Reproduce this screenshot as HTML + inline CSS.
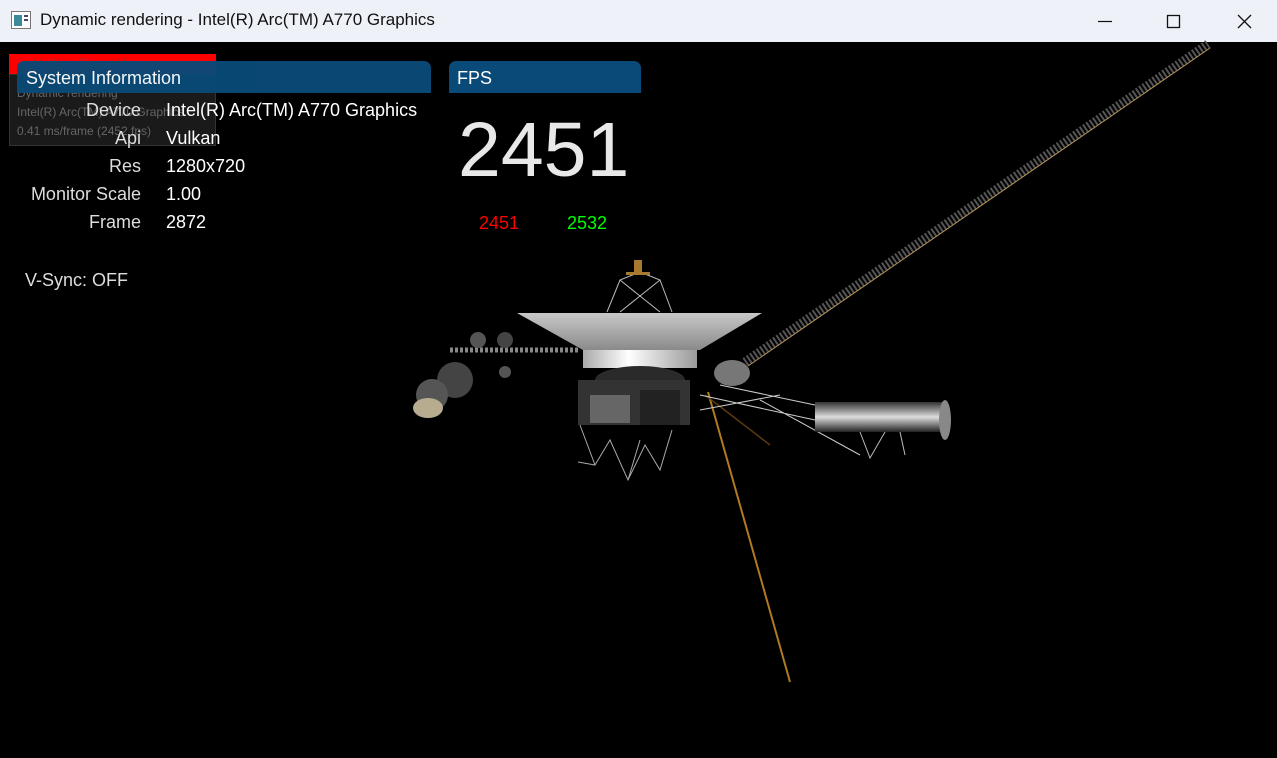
<!DOCTYPE html>
<html><head><meta charset="utf-8"><style>
body{margin:0;width:1277px;height:758px;background:#000;overflow:hidden;position:relative;font-family:"Liberation Sans","DejaVu Sans",sans-serif;}
.tb{position:absolute;left:0;top:0;width:1277px;height:42px;background:#eef1f7;}
.tb .t{position:absolute;left:40px;top:10px;font-size:17px;color:#111;}
.hdr{position:absolute;background:#0a4a78;border-radius:7px 7px 0 0;color:#fff;font-size:18px;}
.l{position:absolute;color:#ddd;font-size:18px;text-align:right;width:130px}
.v{position:absolute;color:#fff;font-size:18px}
</style></head><body>
<div class="tb">
<svg style="position:absolute;left:11px;top:11px" width="20" height="18"><rect x="0.5" y="0.5" width="19" height="17" fill="#fff" stroke="#777"/><rect x="3" y="4" width="8" height="11" fill="#3a8a9a"/><rect x="13" y="4" width="4" height="2" fill="#447"/><rect x="13" y="8" width="4" height="2" fill="#447"/></svg>
<div class="t">Dynamic rendering - Intel(R) Arc(TM) A770 Graphics</div>
<svg style="position:absolute;left:1098px;top:14px" width="160" height="16"><line x1="0" y1="7.5" x2="14" y2="7.5" stroke="#111" stroke-width="1.2"/><rect x="69.5" y="1.5" width="12" height="12" fill="none" stroke="#111" stroke-width="1.3"/><path d="M140 1 L153 14 M153 1 L140 14" stroke="#111" stroke-width="1.3"/></svg>
</div>
<div style="position:absolute;left:9px;top:54px;width:207px;height:20px;background:#f00"></div>
<div style="position:absolute;left:33px;top:55px;font-size:14px;color:#b22">Vulkan Example</div>
<div style="position:absolute;left:9px;top:74px;width:207px;height:72px;background:#1a1a1a;border:1px solid #333;box-sizing:border-box"></div>
<div style="position:absolute;left:17px;top:84px;font-size:12px;color:#666;line-height:19px">Dynamic rendering<br>Intel(R) Arc(TM) A770 Graphics<br>0.41 ms/frame (2452 fps)</div>
<div class="hdr" style="left:17px;top:61px;width:414px;height:32px;opacity:.96"><span style="position:absolute;left:9px;top:7px">System Information</span></div>
<div class="l" style="left:11px;top:100px">Device</div><div class="v" style="left:166px;top:100px">Intel(R) Arc(TM) A770 Graphics</div>
<div class="l" style="left:11px;top:128px">Api</div><div class="v" style="left:166px;top:128px">Vulkan</div>
<div class="l" style="left:11px;top:156px">Res</div><div class="v" style="left:166px;top:156px">1280x720</div>
<div class="l" style="left:11px;top:184px">Monitor Scale</div><div class="v" style="left:166px;top:184px">1.00</div>
<div class="l" style="left:11px;top:212px">Frame</div><div class="v" style="left:166px;top:212px">2872</div>
<div class="v" style="left:25px;top:270px;color:#ddd">V-Sync: OFF</div>
<div class="hdr" style="left:449px;top:61px;width:192px;height:32px"><span style="position:absolute;left:8px;top:7px">FPS</span></div>
<div class="v" style="left:458px;top:106px;font-size:77px;color:#e8e8e8">2451</div>
<div class="v" style="left:479px;top:213px;color:#f00">2451</div>
<div class="v" style="left:567px;top:213px;color:#0f0">2532</div>
<svg style="position:absolute;left:0;top:0" width="1277" height="758">
<defs>
<linearGradient id="dish" x1="0" y1="0" x2="0" y2="1"><stop offset="0" stop-color="#c8c8c8"/><stop offset="1" stop-color="#8a8a8a"/></linearGradient>
<linearGradient id="ring" x1="0" y1="0" x2="1" y2="0"><stop offset="0" stop-color="#aaa"/><stop offset=".4" stop-color="#fff"/><stop offset="1" stop-color="#999"/></linearGradient>
<linearGradient id="cyl" x1="0" y1="0" x2="0" y2="1"><stop offset="0" stop-color="#333"/><stop offset=".5" stop-color="#ddd"/><stop offset="1" stop-color="#222"/></linearGradient>
</defs>
<line x1="745" y1="362" x2="1208" y2="44" stroke="#555" stroke-width="9" stroke-dasharray="2 2"/>
<line x1="748" y1="366" x2="1210" y2="48" stroke="#b9955a" stroke-width="1"/>
<line x1="708" y1="392" x2="790" y2="682" stroke="#b07a20" stroke-width="2"/>
<line x1="705" y1="395" x2="770" y2="445" stroke="#5a3a10" stroke-width="1.5"/>
<path d="M607 312 L620 280 L640 272 L660 280 L672 312 M620 280 L660 312 M660 280 L620 312" stroke="#bbb" fill="none"/>
<rect x="634" y="260" width="8" height="14" fill="#a87a30"/><rect x="626" y="272" width="24" height="3" fill="#a87a30"/>
<polygon points="517,313 762,313 700,350 583,350" fill="url(#dish)"/>
<rect x="583" y="350" width="114" height="18" fill="url(#ring)"/>
<ellipse cx="640" cy="380" rx="45" ry="14" fill="#2a2a2a"/>
<rect x="578" y="380" width="112" height="45" fill="#333"/>
<rect x="590" y="395" width="40" height="28" fill="#666"/>
<rect x="640" y="390" width="40" height="35" fill="#222"/>
<path d="M580 425 L595 465 L610 440 L628 480 L645 445 L660 470 L672 430 M595 465 L578 462 M628 480 L640 440" stroke="#aaa" fill="none"/>
<line x1="450" y1="350" x2="578" y2="350" stroke="#888" stroke-width="5" stroke-dasharray="3 2"/>
<circle cx="455" cy="380" r="18" fill="#444"/>
<circle cx="432" cy="395" r="16" fill="#555"/>
<ellipse cx="428" cy="408" rx="15" ry="10" fill="#b8ac90"/>
<circle cx="478" cy="340" r="8" fill="#555"/><circle cx="505" cy="340" r="8" fill="#444"/><circle cx="505" cy="372" r="6" fill="#555"/>
<path d="M700 395 L815 420 M720 385 L815 405 M700 410 L780 395 M760 400 L860 455" stroke="#ccc" fill="none"/>
<ellipse cx="732" cy="373" rx="18" ry="13" fill="#777"/>
<rect x="815" y="402" width="130" height="30" fill="url(#cyl)"/>
<ellipse cx="945" cy="420" rx="6" ry="20" fill="#888"/>
<path d="M860 432 L870 458 L885 432 M900 432 L905 455" stroke="#bbb" fill="none"/>
</svg>
</body></html>
